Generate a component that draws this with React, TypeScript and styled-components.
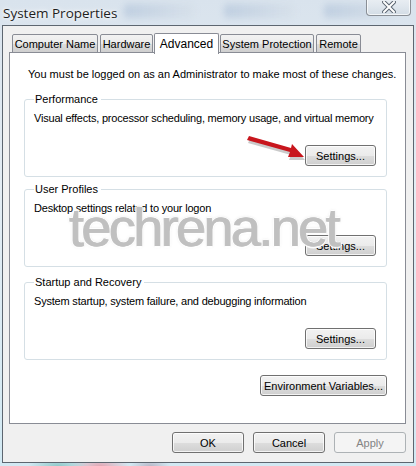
import styled, { createGlobalStyle } from "styled-components";

const GlobalStyle = createGlobalStyle`
  html, body {
    margin: 0;
    padding: 0;
  }
  body {
    width: 416px;
    height: 466px;
    overflow: hidden;
    font-family: "Liberation Sans", Arial, sans-serif;
    background:
      radial-gradient(ellipse 30px 10px at 58px 466px, #8fc9c9 0%, rgba(143,201,201,0) 100%),
      radial-gradient(ellipse 30px 10px at 100px 466px, #e3a7b4 0%, rgba(227,167,180,0) 100%),
      radial-gradient(ellipse 20px 8px at 150px 466px, #b8b8c8 0%, rgba(184,184,200,0) 100%),
      linear-gradient(180deg, #d9e3ed 0%, #e4edf4 40%, #d2e9f3 100%);
  }
`;

const tabs = [
  { name: "Computer Name", width: 86 },
  { name: "Hardware", width: 53 },
  { name: "Advanced", width: 65, active: true },
  { name: "System Protection", width: 94 },
  { name: "Remote", width: 45 },
];

const groups = [
  {
    title: "Performance",
    text: "Visual effects, processor scheduling, memory usage, and virtual memory",
    gap: 0,
  },
  { title: "User Profiles", text: "Desktop settings related to your logon", gap: 5 },
  {
    title: "Startup and Recovery",
    text: "System startup, system failure, and debugging information",
    gap: 8,
  },
];

export default function App() {
  return (
    <>
      <GlobalStyle />
      <Window>
        <TitleBar>
          <TaskGhost style={{ left: 122 }} />
          <TaskGhost style={{ left: 222 }} />
          <TaskGhost style={{ left: 322 }} />
          <Title>System Properties</Title>
          <CloseButton aria-label="Close">
            <svg width="14" height="12" viewBox="0 0 14 12">
              <path
                d="M2 1 L12 11 M12 1 L2 11"
                stroke="#5a6470"
                strokeWidth="4"
                strokeLinecap="square"
              />
              <path
                d="M2 1 L12 11 M12 1 L2 11"
                stroke="#ffffff"
                strokeWidth="2"
                strokeLinecap="square"
              />
            </svg>
          </CloseButton>
        </TitleBar>
        <Client>
          <TabStrip>
            {tabs.map((t) => (
              <Tab key={t.name} $active={!!t.active} $width={t.width}>
                {t.name}
              </Tab>
            ))}
          </TabStrip>
          <Panel>
            <Notice>
              You must be logged on as an Administrator to make most of these
              changes.
            </Notice>
            {groups.map((g) => (
              <GroupBox key={g.title} $gap={g.gap}>
                <Legend>{g.title}</Legend>
                <GroupText>{g.text}</GroupText>
                <ButtonRow>
                  <Button $width={71}>Settings...</Button>
                </ButtonRow>
              </GroupBox>
            ))}
            <EnvRow>
              <Button $width={127}>Environment Variables...</Button>
            </EnvRow>
            <Watermark>techrena.net</Watermark>
            <Arrow width="64" height="28" viewBox="0 0 64 28">
              <path
                d="M1 4 L44 16 L42 21 L58 21 L46 8 L45 12 L3 0 Z"
                fill="#7a7a7a"
                opacity="0.4"
                transform="translate(1 3)"
              />
              <path
                d="M1 4 L44 16 L42 21 L58 21 L46 8 L45 12 L3 0 Z"
                fill="#c8161d"
              />
            </Arrow>
          </Panel>
          <Footer>
            <Button $width={72}>OK</Button>
            <Button $width={72}>Cancel</Button>
            <Button $width={72} disabled>
              Apply
            </Button>
          </Footer>
        </Client>
      </Window>
    </>
  );
}

const Window = styled.div`
  width: 416px;
  height: 466px;
  display: flex;
  flex-direction: column;
  padding: 0 2px 0 2px;
  box-sizing: border-box;
`;

const TitleBar = styled.div`
  position: relative;
  height: 25px;
  flex: none;
`;

const TaskGhost = styled.div`
  position: absolute;
  top: 4px;
  width: 70px;
  height: 14px;
  border-radius: 4px;
  background: linear-gradient(90deg, rgba(120, 150, 190, 0.25), rgba(200, 210, 220, 0.15));
  filter: blur(3px);
`;

const Title = styled.div`
  position: relative;
  padding: 4px 0 0 1px;
  font-family: "Open Sans", "Noto Sans", sans-serif;
  font-size: 13.5px;
  color: #1e1e1e;
  text-shadow: 0 0 6px #ffffff, 0 0 3px #ffffff;
`;

const CloseButton = styled.div`
  position: absolute;
  right: 3px;
  top: -1px;
  width: 45px;
  height: 17px;
  box-sizing: border-box;
  border: 1px solid #8a8f96;
  border-top: none;
  border-radius: 0 0 4px 4px;
  background: linear-gradient(180deg, #e9eef3 0%, #dfe6ed 50%, #d3dce5 100%);
  box-shadow: inset 0 0 0 1px rgba(255, 255, 255, 0.7);
  display: flex;
  align-items: center;
  justify-content: center;
`;

const Client = styled.div`
  flex: 1;
  margin-bottom: 3px;
  background: #f0f0f0;
  border: 1px solid #5d6670;
  display: flex;
  flex-direction: column;
  padding: 6px 7px 0 6px;
`;

const TabStrip = styled.div`
  display: flex;
  align-items: flex-end;
  gap: 2px;
  height: 21px;
  padding-left: 3px;
  position: relative;
  z-index: 1;
`;

const Tab = styled.div<{ $active: boolean; $width: number }>`
  box-sizing: border-box;
  width: ${(p) => p.$width}px;
  height: ${(p) => (p.$active ? 21 : 19)}px;
  margin: ${(p) => (p.$active ? "0 -1px -1px" : "0")};
  border: 1px solid #898c95;
  border-bottom: ${(p) => (p.$active ? "none" : "1px solid #898c95")};
  border-radius: 2px 2px 0 0;
  background: ${(p) =>
    p.$active
      ? "#ffffff"
      : "linear-gradient(180deg, #f2f2f2 0%, #ebebeb 50%, #dddddd 51%, #cfcfcf 100%)"};
  font-size: ${(p) => (p.$active ? "12px" : "11px")};
  color: #000;
  display: flex;
  align-items: center;
  justify-content: center;
  padding-top: ${(p) => (p.$active ? "0" : "1px")};
  white-space: nowrap;
`;

const Panel = styled.div`
  position: relative;
  box-sizing: border-box;
  height: 372px;
  margin-top: -1px;
  background: #ffffff;
  border: 1px solid #898c95;
  padding: 13px 18px 0 14px;
  display: flex;
  flex-direction: column;
  font-size: 11px;
  color: #000;
  white-space: nowrap;
`;

const Notice = styled.div`
  padding-left: 4px;
  height: 16px;
  line-height: 16px;
  margin-bottom: 10px;
`;

const GroupBox = styled.fieldset<{ $gap: number }>`
  position: relative;
  min-width: 0;
  margin: ${(p) => p.$gap}px 0 0;
  box-sizing: border-box;
  border: 1px solid #d5dfe5;
  border-radius: 3px;
  padding: 0 10px 10px 9px;
`;

const Legend = styled.legend`
  padding: 0 3px 0 1px;
  margin-left: 0;
  font-size: 11px;
  line-height: 14px;
  color: #000;
`;

const GroupText = styled.div`
  margin-top: 5px;
  line-height: 14px;
  letter-spacing: -0.2px;
`;

const ButtonRow = styled.div`
  display: flex;
  justify-content: flex-end;
  margin-top: 20px;
`;

const EnvRow = styled.div`
  display: flex;
  justify-content: flex-end;
  margin-top: 15px;
`;

const Button = styled.button<{ $width: number }>`
  box-sizing: border-box;
  width: ${(p) => p.$width}px;
  height: 21px;
  padding: 0;
  border: 1px solid #707070;
  border-radius: 3px;
  background: linear-gradient(180deg, #f2f2f2 0%, #ebebeb 50%, #dddddd 51%, #cfcfcf 100%);
  box-shadow: inset 0 0 0 1px rgba(255, 255, 255, 0.75);
  font-family: "Liberation Sans", Arial, sans-serif;
  font-size: 11px;
  color: #000;
  &:disabled {
    border-color: #adb2b5;
    background: #f4f4f4;
    box-shadow: none;
    color: #838383;
  }
`;

const Footer = styled.div`
  display: flex;
  justify-content: flex-end;
  gap: 9px;
  padding-top: 8px;
`;

const Watermark = styled.div`
  position: absolute;
  left: 59px;
  top: 144px;
  font-family: "Liberation Sans", Arial, sans-serif;
  font-size: 54px;
  letter-spacing: -2.6px;
  line-height: 60px;
  color: rgba(192, 192, 192, 0.9);
  text-shadow:
    0.6px 0 0 rgba(192, 192, 192, 0.9),
    -0.6px 0 0 rgba(192, 192, 192, 0.9),
    1.6px 0 0 rgba(255, 255, 255, 0.9),
    -1.6px 0 0 rgba(255, 255, 255, 0.9),
    0 1.5px 0 rgba(255, 255, 255, 0.9),
    0 -1.5px 0 rgba(255, 255, 255, 0.9),
    0 0 3px rgba(120, 120, 120, 0.35);
  pointer-events: none;
`;

const Arrow = styled.svg`
  position: absolute;
  left: 236px;
  top: 83px;
  pointer-events: none;
`;
